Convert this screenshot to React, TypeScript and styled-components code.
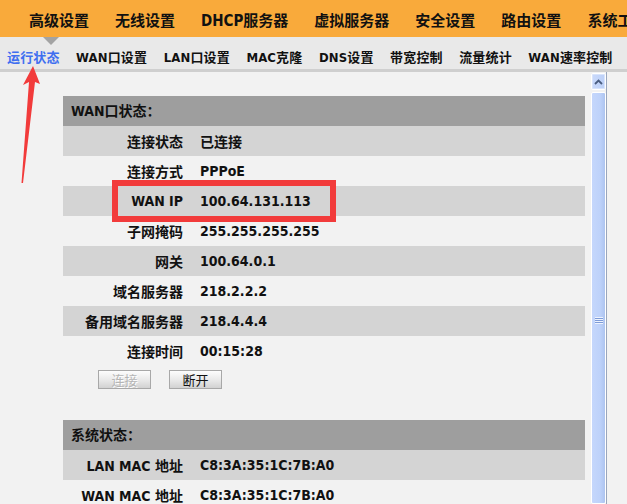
import styled, { createGlobalStyle } from "styled-components";

const GlobalStyle = createGlobalStyle`
  html, body {
    margin: 0;
    padding: 0;
    background: #f2f2f2;
    overflow: hidden;
  }
  body {
    font-family: "DejaVu Sans Condensed", "DejaVu Sans", "Noto Sans CJK SC", sans-serif;
    color: #111;
  }
`;

const mainMenu = ["高级设置", "无线设置", "DHCP服务器", "虚拟服务器", "安全设置", "路由设置", "系统工具"];
const subMenu = ["运行状态", "WAN口设置", "LAN口设置", "MAC克隆", "DNS设置", "带宽控制", "流量统计", "WAN速率控制"];

const wanRows = [
  ["连接状态", "已连接"],
  ["连接方式", "PPPoE"],
  ["WAN IP", "100.64.131.113"],
  ["子网掩码", "255.255.255.255"],
  ["网关", "100.64.0.1"],
  ["域名服务器", "218.2.2.2"],
  ["备用域名服务器", "218.4.4.4"],
  ["连接时间", "00:15:28"],
];

const sysRows = [
  ["LAN MAC 地址", "C8:3A:35:1C:7B:A0"],
  ["WAN MAC 地址", "C8:3A:35:1C:7B:A0"],
];

export default function App() {
  return (
    <Page>
      <GlobalStyle />
      <TopNav>
        {mainMenu.map((m) => (
          <TopItem key={m}>{m}</TopItem>
        ))}
      </TopNav>
      <SubNav>
        <Pointer />
        {subMenu.map((m, i) => (
          <SubItem key={m} $active={i === 0}>
            {m}
          </SubItem>
        ))}
      </SubNav>
      <Body>
        <Main>
          <Panel>
            <PanelHead>WAN口状态：</PanelHead>
            {wanRows.map(([k, v], i) => (
              <Row key={k} $shade={i % 2 === 0}>
                <Label>{k}</Label>
                <Value>{v}</Value>
                {k === "WAN IP" && <Highlight />}
              </Row>
            ))}
            <Buttons>
              <Btn disabled>连接</Btn>
              <Btn>断开</Btn>
            </Buttons>
          </Panel>
          <Panel>
            <PanelHead>系统状态：</PanelHead>
            {sysRows.map(([k, v], i) => (
              <Row key={k} $shade={i % 2 === 0}>
                <Label>{k}</Label>
                <Value>{v}</Value>
              </Row>
            ))}
          </Panel>
        </Main>
        <ScrollBar>
          <ScrollUp>
            <svg width="9" height="6" viewBox="0 0 9 6">
              <path d="M1 5 L4.5 1.5 L8 5" fill="none" stroke="#4a5d80" strokeWidth="1.8" />
            </svg>
          </ScrollUp>
          <Thumb>
            <Grip />
          </Thumb>
        </ScrollBar>
        <Gutter />
      </Body>
      <Arrow width="50" height="190" viewBox="0 0 50 190">
        <polygon points="33,66 40,84 35,82 23,183 21.5,183 29,82 23,85" fill="#f23b3b" />
      </Arrow>
    </Page>
  );
}

const Page = styled.div`
  position: relative;
  width: 627px;
  height: 504px;
  display: flex;
  flex-direction: column;
  overflow: hidden;
`;

const TopNav = styled.div`
  flex-shrink: 0;
  height: 37px;
  background: #f9aa3b;
  display: flex;
  align-items: center;
  padding: 2px 0 0 16px;
  box-sizing: border-box;
  white-space: nowrap;
`;

const TopItem = styled.div`
  padding: 0 13px;
  font-size: 15px;
  font-weight: bold;
  color: #111;
`;

const SubNav = styled.div`
  flex-shrink: 0;
  position: relative;
  height: 35px;
  box-sizing: border-box;
  background: #e9e9e9;
  border-bottom: 3px solid #cfcfcf;
  display: flex;
  align-items: flex-end;
  gap: 16.5px;
  padding: 0 0 2px 7px;
  white-space: nowrap;
`;

const Pointer = styled.div`
  position: absolute;
  left: 43px;
  top: 0;
  width: 0;
  height: 0;
  border-left: 8px solid transparent;
  border-right: 8px solid transparent;
  border-top: 8px solid #a3a3a3;
`;

const SubItem = styled.div<{ $active?: boolean }>`
  font-size: 13px;
  font-weight: bold;
  line-height: 18px;
  letter-spacing: 0.15px;
  color: ${(p) => (p.$active ? "#3f6ff0" : "#111")};
`;

const Body = styled.div`
  flex: 1;
  min-height: 0;
  display: flex;
  background: #f2f2f2;
  overflow: hidden;
`;

const Main = styled.div`
  flex: 1;
  padding: 24px 6px 0 63px;
  display: flex;
  flex-direction: column;
  gap: 31px;
`;

const Panel = styled.div`
  flex-shrink: 0;
  display: flex;
  flex-direction: column;
`;

const PanelHead = styled.div`
  height: 30px;
  line-height: 30px;
  background: #9e9e9e;
  padding-left: 8px;
  font-size: 14px;
  font-weight: bold;
  color: #111;
`;

const Row = styled.div<{ $shade: boolean }>`
  position: relative;
  flex-shrink: 0;
  height: 30px;
  display: flex;
  align-items: center;
  gap: 17px;
  background: ${(p) => (p.$shade ? "#d4d4d4" : "transparent")};
  font-size: 14px;
  font-weight: bold;
  color: #111;
`;

const Label = styled.div`
  width: 120px;
  text-align: right;
  white-space: nowrap;
`;

const Value = styled.div`
  white-space: nowrap;
`;

const Highlight = styled.div`
  position: absolute;
  left: 49px;
  top: -6px;
  width: 212px;
  height: 30px;
  border: 6px solid #f23b3b;
`;

const Buttons = styled.div`
  display: flex;
  gap: 18px;
  padding: 4px 0 0 35px;
`;

const Btn = styled.button`
  width: 53px;
  height: 19px;
  padding: 0;
  border: 1px solid #a8a8a8;
  background: linear-gradient(#fdfdfd, #e8e8e8 55%, #d2d2d2);
  font-family: "Noto Sans CJK SC", sans-serif;
  font-size: 13px;
  line-height: 16px;
  color: #111;

  &:disabled {
    color: #b5b5b5;
    text-shadow: 1px 1px 0 #fff;
  }
`;

const ScrollBar = styled.div`
  width: 15px;
  display: flex;
  flex-direction: column;
  gap: 2px;
  padding-top: 1px;
  border-right: 1px solid #9aa6bc;
`;

const ScrollUp = styled.div`
  flex-shrink: 0;
  height: 15px;
  border: 1px solid #fff;
  border-radius: 2px;
  background: linear-gradient(90deg, #c9d9fb, #bcd0f7);
  display: flex;
  align-items: center;
  justify-content: center;
  box-shadow: inset 0 0 0 1px #d8e4fc;
`;

const Thumb = styled.div`
  flex: 1;
  border: 1px solid #fff;
  border-radius: 2px;
  background: linear-gradient(90deg, #c5d7fc, #bed2fa 60%, #adc4f0);
  display: flex;
  justify-content: center;
  padding-top: 224px;
`;

const Grip = styled.div`
  width: 8px;
  height: 7px;
  background: repeating-linear-gradient(#eef3fe 0 1px, #7d9bd8 1px 2px);
`;

const Gutter = styled.div`
  width: 20px;
`;

const Arrow = styled.svg`
  position: absolute;
  left: 0;
  top: 0;
`;
